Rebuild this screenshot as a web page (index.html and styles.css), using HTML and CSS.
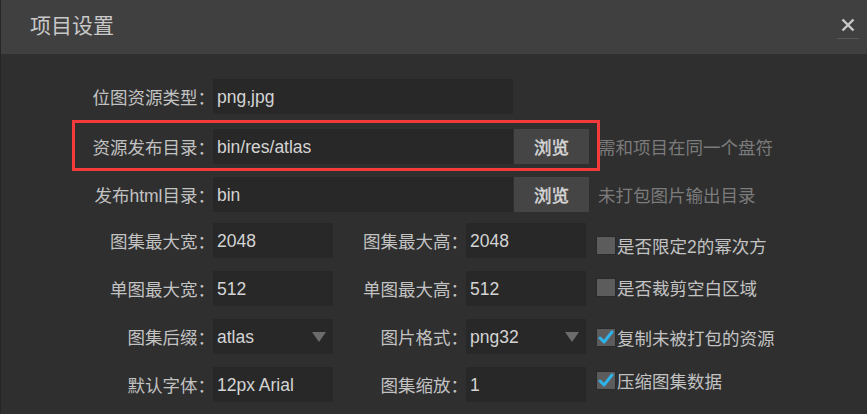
FILE: index.html
```html
<!DOCTYPE html>
<html lang="zh-CN">
<head>
<meta charset="utf-8">
<title>项目设置</title>
<link rel="stylesheet" href="styles.css">
</head>
<body>
<div class="dialog">
  <div class="titlebar">
    <div class="title">项目设置</div>
    <div class="close">
      <svg width="14" height="14" viewBox="0 0 14 14"><path d="M1.5 1.5 L12.5 12.5 M12.5 1.5 L1.5 12.5" stroke="#c9c9c9" stroke-width="2.4" fill="none"/></svg>
    </div>
  </div>
  <div class="form">
    <div class="row">
      <div class="label">位图资源类型：</div>
      <div class="input wide">png,jpg</div>
    </div>
    <div class="row r2">
      <div class="label">资源发布目录：</div>
      <div class="input wide">bin/res/atlas</div>
      <div class="btn">浏览</div>
      <div class="hint">需和项目在同一个盘符</div>
    </div>
    <div class="row r3">
      <div class="label">发布html目录：</div>
      <div class="input wide">bin</div>
      <div class="btn">浏览</div>
      <div class="hint">未打包图片输出目录</div>
    </div>
    <div class="row">
      <div class="label">图集最大宽：</div>
      <div class="input short">2048</div>
      <div class="label2">图集最大高：</div>
      <div class="input short">2048</div>
      <div class="check c1"><span class="box"></span>是否限定2的幂次方</div>
    </div>
    <div class="row">
      <div class="label">单图最大宽：</div>
      <div class="input short">512</div>
      <div class="label2">单图最大高：</div>
      <div class="input short">512</div>
      <div class="check c2"><span class="box"></span>是否裁剪空白区域</div>
    </div>
    <div class="row">
      <div class="label">图集后缀：</div>
      <div class="input short select">atlas<span class="arrow"></span></div>
      <div class="label2">图片格式：</div>
      <div class="input short select">png32<span class="arrow"></span></div>
      <div class="check c3"><span class="box"><svg width="18" height="17" viewBox="0 0 18 17"><path d="M3 9 L7 13 L15 3" stroke="#2fb4ea" stroke-width="3" fill="none" stroke-linecap="round" stroke-linejoin="round"/></svg></span>复制未被打包的资源</div>
    </div>
    <div class="row">
      <div class="label">默认字体：</div>
      <div class="input short">12px Arial</div>
      <div class="label2">图集缩放：</div>
      <div class="input short">1</div>
      <div class="check c4"><span class="box"><svg width="18" height="17" viewBox="0 0 18 17"><path d="M3 9 L7 13 L15 3" stroke="#2fb4ea" stroke-width="3" fill="none" stroke-linecap="round" stroke-linejoin="round"/></svg></span>压缩图集数据</div>
    </div>
    <div class="highlight"></div>
  </div>
</div>
</body>
</html>
```
FILE: styles.css
```css
html, body {
  margin: 0;
  padding: 0;
}
body {
  width: 867px;
  height: 414px;
  overflow: hidden;
  background: #2f2f2f;
  font-family: "Liberation Sans", "Noto Sans CJK SC", sans-serif;
}
.dialog {
  width: 867px;
  height: 414px;
  background: #2f2f2f;
  border-left: 1px solid #262626;
  box-sizing: border-box;
}
.titlebar {
  height: 54px;
  background: #404040;
  display: flex;
  justify-content: space-between;
  align-items: flex-start;
}
.title {
  margin: 11px 0 0 29px;
  font-size: 21px;
  line-height: 30px;
  color: #c8c8c8;
}
.close {
  margin: 18px 8px 0 0;
  width: 22px;
  height: 20px;
  border-bottom: 1px solid #585858;
  display: flex;
  justify-content: center;
  align-items: flex-start;
}
.form {
  position: relative;
  padding-top: 25px;
  display: flex;
  flex-direction: column;
  gap: 13px;
}
.row {
  display: flex;
  align-items: center;
  height: 35px;
}
.r2 {
  margin-top: 2px;
  margin-bottom: -2px;
}
.r3 {
  margin-top: 2px;
  margin-bottom: -2px;
}
.label {
  width: 214px;
  text-align: right;
  font-size: 17.5px;
  color: #c2c2c2;
  white-space: nowrap;
}
.label2 {
  width: 135px;
  text-align: right;
  font-size: 17.5px;
  color: #c2c2c2;
  white-space: nowrap;
}
.input {
  margin-left: -2px;
  height: 35px;
  background: #282828;
  color: #d4d4d4;
  font-family: "Liberation Sans", "Noto Sans CJK SC", sans-serif;
  font-size: 17.5px;
  line-height: 36px;
  padding-left: 4px;
  box-sizing: border-box;
  position: relative;
}
.wide {
  width: 300px;
}
.short {
  width: 120px;
}
.arrow {
  position: absolute;
  right: 7px;
  top: 13px;
  width: 0;
  height: 0;
  border-left: 7px solid transparent;
  border-right: 7px solid transparent;
  border-top: 10px solid #6c6c6c;
}
.btn {
  margin-left: 1px;
  width: 75px;
  height: 35px;
  background: #454545;
  color: #d6d6d6;
  font-size: 17.5px;
  -webkit-text-stroke: 0.5px #d6d6d6;
  display: flex;
  align-items: center;
  justify-content: center;
}
.hint {
  margin-left: 9px;
  font-size: 17.5px;
  color: #7b7b7b;
  white-space: nowrap;
}
.check {
  margin-left: 10px;
  display: flex;
  align-items: center;
  font-size: 17.5px;
  color: #c2c2c2;
  white-space: nowrap;
  align-self: flex-start;
}
.c1 { margin-top: 10px; }
.c2 { margin-top: 4px; }
.c3 { margin-top: 6px; }
.c4 { margin-top: 1px; }
.box {
  width: 20px;
  height: 19px;
  box-sizing: border-box;
  background: #5c5c5c;
  border: 1px solid #2a2a2a;
  margin-right: 1px;
  display: flex;
  align-items: center;
  justify-content: center;
}
.highlight {
  position: absolute;
  left: 71px;
  top: 66px;
  width: 528px;
  height: 51px;
  border: 3px solid #f43a3a;
  box-sizing: border-box;
  pointer-events: none;
}
```
